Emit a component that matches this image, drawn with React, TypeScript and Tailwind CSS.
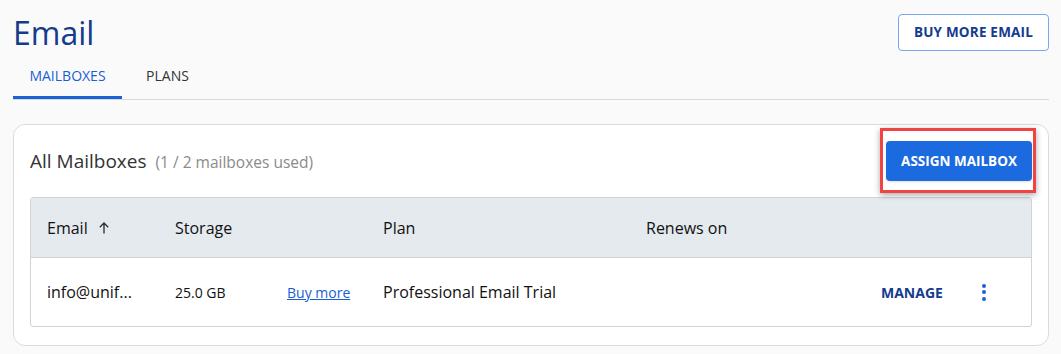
import React from 'react';

const App: React.FC = () => {
  return (
    <div className="min-h-[354px] w-[1061px] bg-[#fafafa] pl-[13px] pr-[12px] pt-[14px] text-[#222] font-['Open_Sans',sans-serif]">
      <div className="flex h-[38px] items-start justify-between">
        <h1 className="-mt-[1px] text-[32px] leading-[40px] text-[#163b8c]">Email</h1>
        <button className="h-[37px] w-[151px] rounded-[4px] border border-[#7aa7ea] bg-white text-[13.5px] font-bold tracking-[0.2px] text-[#143b8f]">
          BUY MORE EMAIL
        </button>
      </div>

      <div className="mt-[2px] flex border-b border-[#d9d9d9]">
        <div className="w-[109px] border-b-[3px] border-[#1a63d6] pt-[12px] pb-[11px] text-center text-[14px] leading-[19px] text-[#1a5ed3]">
          MAILBOXES
        </div>
        <div className="w-[91px] pt-[12px] pb-[11px] text-center text-[14px] leading-[19px] text-[#333]">PLANS</div>
      </div>

      <div className="mt-[24px] rounded-[12px] border border-[#d8dce0] bg-white px-[16px] pt-[16px] pb-[18px]">
        <div className="flex items-center justify-between">
          <div className="flex items-baseline gap-[9px]">
            <span className="text-[19px] text-[#333]">All Mailboxes</span>
            <span className="text-[15.5px] text-[#8a8a8a]">(1 / 2 mailboxes used)</span>
          </div>
          <div className="relative">
            <button className="h-[40px] w-[146px] rounded-[4px] bg-[#1b6ae0] text-[13.5px] font-bold text-white shadow-sm">
              ASSIGN MAILBOX
            </button>
            <div className="pointer-events-none absolute -left-[6px] -right-[4px] -top-[13px] -bottom-[12px] border-[3px] border-[#ef4444] shadow-[0_2px_6px_rgba(0,0,0,0.35)]" />
          </div>
        </div>

        <div className="mt-[16px] overflow-hidden rounded-[3px] border border-[#cfd4d9]">
          <div className="flex h-[60px] items-center border-b border-[#cfd4d9] bg-[#e4eaee] text-[16px] text-[#111]">
            <div className="flex w-[144px] items-center gap-[9px] pl-[16px]">
              Email
              <svg width="14" height="14" viewBox="0 0 14 14" fill="none" stroke="#333" strokeWidth="1.4">
                <path d="M7 12.5V2M2.8 6.2L7 2l4.2 4.2" />
              </svg>
            </div>
            <div className="w-[208px]">Storage</div>
            <div className="w-[263px]">Plan</div>
            <div>Renews on</div>
          </div>
          <div className="flex h-[68px] items-center text-[16px] text-[#111]">
            <div className="w-[144px] pl-[16px]">info@unif...</div>
            <div className="w-[112px] text-[14px]">25.0 GB</div>
            <div className="w-[96px] text-[14px] text-[#1a5ed3] underline">Buy more</div>
            <div className="flex-1">Professional Email Trial</div>
            <div className="w-[100px] text-[14px] font-bold text-[#143b8f]">MANAGE</div>
            <div className="flex w-[50px] flex-col items-start gap-[2.5px] pl-[1px]">
              <span className="h-[4px] w-[4px] rounded-full bg-[#1a63d6]" />
              <span className="h-[4px] w-[4px] rounded-full bg-[#1a63d6]" />
              <span className="h-[4px] w-[4px] rounded-full bg-[#1a63d6]" />
            </div>
          </div>
        </div>
      </div>
    </div>
  );
};

export default App;
